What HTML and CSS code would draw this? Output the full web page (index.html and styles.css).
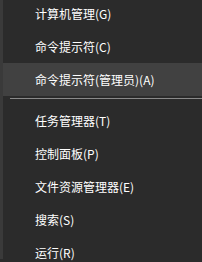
FILE: index.html
```html
<!DOCTYPE html>
<html lang="zh-CN">
<head>
  <meta charset="UTF-8">
  <title>Win+X</title>
  <meta name="viewport" content="width=device-width, initial-scale=1.0">
  <link rel="stylesheet" href="styles.css">
</head>
<body>
  <div class="menu">
    <div class="item">计算机管理(G)</div>
    <div class="item">命令提示符(C)</div>
    <div class="item active">命令提示符(管理员)(A)</div>
    <div class="sep"></div>
    <div class="item">任务管理器(T)</div>
    <div class="item">控制面板(P)</div>
    <div class="item">文件资源管理器(E)</div>
    <div class="item">搜索(S)</div>
    <div class="item">运行(R)</div>
  </div>
</body>
</html>
```

FILE: styles.css
```css
* { box-sizing: border-box; }
html, body {
  margin: 0;
  height: 100%;
  overflow: hidden;
  background: #2b2b2b;
}
body {
  font-family: "Noto Sans CJK SC", "Microsoft YaHei", sans-serif;
  font-size: 12px;
  color: #fff;
}
.menu {
  height: 100%;
  border-left: 3px solid #3a3a3a;
  margin-top: -3px;
}
.item {
  height: 33px;
  line-height: 33px;
  padding-left: 32px;
  white-space: nowrap;
}
.item.active {
  background: #414141;
}
.sep {
  height: 8px;
  padding-top: 2px;
  margin-left: 7px;
}
.sep::before {
  content: "";
  display: block;
  height: 1px;
  background: #8a8a8a;
}
```
